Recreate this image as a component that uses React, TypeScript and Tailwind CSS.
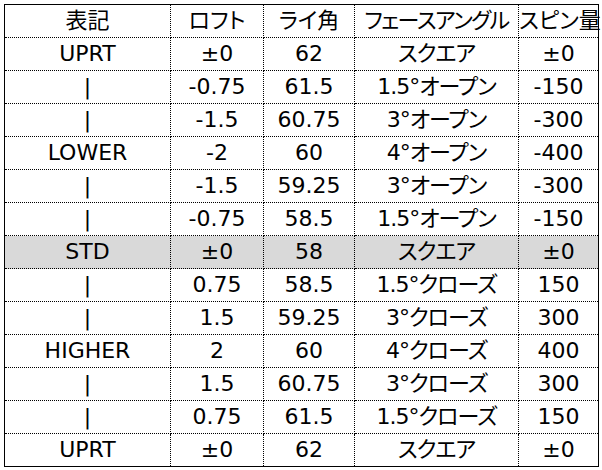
const header = ["表記", "ロフト", "ライ角", "フェースアングル", "スピン量"];

const rows = [
  ["UPRT", "±0", "62", "スクエア", "±0"],
  ["|", "-0.75", "61.5", "1.5°オープン", "-150"],
  ["|", "-1.5", "60.75", "3°オープン", "-300"],
  ["LOWER", "-2", "60", "4°オープン", "-400"],
  ["|", "-1.5", "59.25", "3°オープン", "-300"],
  ["|", "-0.75", "58.5", "1.5°オープン", "-150"],
  ["STD", "±0", "58", "スクエア", "±0"],
  ["|", "0.75", "58.5", "1.5°クローズ", "150"],
  ["|", "1.5", "59.25", "3°クローズ", "300"],
  ["HIGHER", "2", "60", "4°クローズ", "400"],
  ["|", "1.5", "60.75", "3°クローズ", "300"],
  ["|", "0.75", "61.5", "1.5°クローズ", "150"],
  ["UPRT", "±0", "62", "スクエア", "±0"],
];

const widths = ["w-[166px]", "w-[93px]", "w-[91px]", "w-[164px]", "w-[80px]"];

const cell =
  "h-[33px] p-0 text-center align-middle whitespace-nowrap border border-dotted border-black";

export default function App() {
  return (
    <div className="pl-[4px] pt-[4px] bg-white min-h-[470px]">
      <table
        className="border-collapse border border-solid border-black text-[22px] leading-none text-black [font-feature-settings:'palt'] w-[595px] table-fixed"
        style={{ fontFamily: '"DejaVu Sans", "Noto Sans CJK JP", sans-serif' }}
      >
        <thead>
          <tr>
            {header.map((h, i) => (
              <th
                key={i}
                className={`${cell} ${widths[i]} font-normal ${i === 3 ? "tracking-[-1.5px]" : ""}`}
              >
                {h}
              </th>
            ))}
          </tr>
        </thead>
        <tbody>
          {rows.map((r, ri) => (
            <tr key={ri} className={r[0] === "STD" ? "bg-[#d9d9d9]" : ""}>
              {r.map((c, ci) => (
                <td key={ci} className={`${cell} ${ci === 3 ? "tracking-[-1px]" : ""}`}>
                  {c}
                </td>
              ))}
            </tr>
          ))}
        </tbody>
      </table>
    </div>
  );
}
